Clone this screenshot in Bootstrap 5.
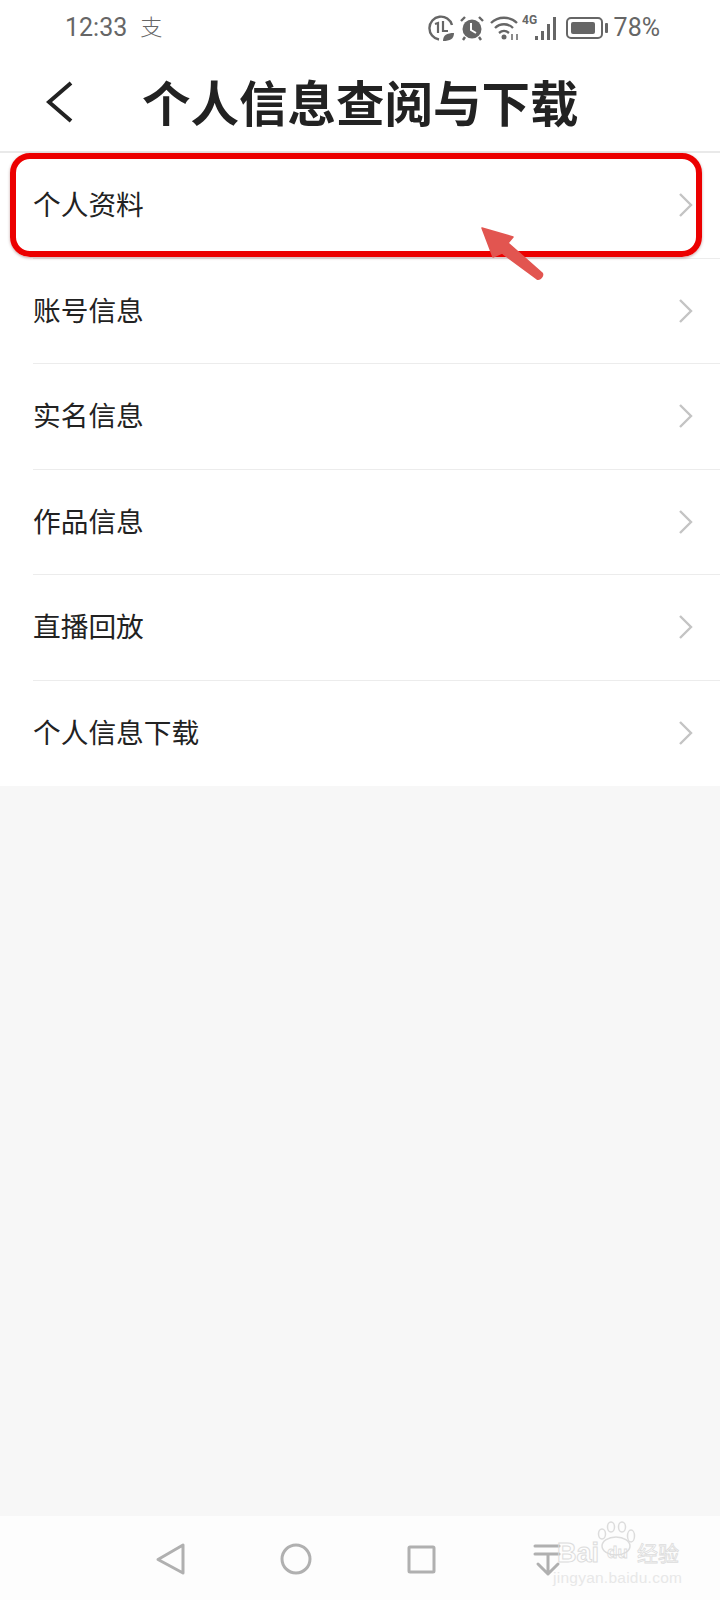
<!DOCTYPE html>
<html lang="zh-CN">
<head>
  <meta charset="UTF-8">
  <meta name="viewport" content="width=device-width, initial-scale=1.0">
  <title>个人信息查阅与下载</title>
  <link href="https://cdn.jsdelivr.net/npm/bootstrap@5.3.0/dist/css/bootstrap.min.css" rel="stylesheet">
  <style>
    body { background: #f7f7f7; font-family: "Noto Sans CJK SC", "Noto Sans", sans-serif; color: #222; }
    .phone { width: 720px; height: 1600px; }
    .status-bar { height: 56px; padding: 0 60px 0 65px; background: #fff; color: #666; font-family: Roboto, sans-serif; font-size: 25px; }
    .status-app { font-family: "Noto Sans CJK SC", sans-serif; font-size: 22px; font-weight: 300; margin-left: 13px; margin-bottom: 5px; }
    .status-icons { gap: 6px; }
    .sig-icon { margin-left: -5px; }
    .bat-icon { margin-left: 2px; }
    .title-bar { height: 97px; padding-left: 46px; background: #fff; border-bottom: 2px solid #e9e9e9; }
    .title-bar h1 { font-size: 48.5px; font-weight: 700; margin: 0 0 4px 68px; line-height: 1; color: #222; }
    .back-icon { margin-bottom: 4px; }
    .info-list { background: #fff; }
    .info-row { height: 105.5px; margin-left: 33px; padding-right: 26px; font-size: 27.7px; border-bottom: 1px solid #ececec; }
    .info-row:last-child { border-bottom: 0; }
    .info-row span { margin-bottom: 2px; }
    .mark-frame { left: 10px; top: 153px; width: 692px; height: 104px; border: 6px solid #ec0000; border-radius: 20px; box-shadow: 0 1px 3px rgba(90,0,0,.35); }
    .mark-arrow { left: 476px; top: 222px; }
    .nav-bar { height: 84px; background: #fdfdfd; margin-top: auto; }
    .nav-icon { left: 0; top: 1px; }
    .wm-box { left: 536px; top: 1520px; width: 180px; height: 72px; color: #dcdcdc; }
    .wm-bai { left: 21px; top: 20px; font-family: "Liberation Sans", sans-serif; font-size: 27px; line-height: 1; font-weight: 700; color: transparent; -webkit-text-stroke: 1px #dcdcdc; }
    .wm-du { left: 71px; top: 24px; font-family: "Liberation Sans", sans-serif; font-size: 17px; line-height: 1; font-weight: 700; color: transparent; -webkit-text-stroke: .8px #dcdcdc; }
    .wm-cn { left: 101px; top: 22px; font-size: 21px; line-height: 1; color: transparent; -webkit-text-stroke: .8px #dcdcdc; }
    .wm-url { left: 17px; top: 50px; font-family: "Liberation Sans", sans-serif; font-size: 15.5px; line-height: 1; letter-spacing: .25px; white-space: nowrap; color: #e8e8e8; }
  </style>
</head>
<body class="m-0">
<div class="phone d-flex flex-column position-relative overflow-hidden">

  <!-- status bar -->
  <div class="status-bar d-flex align-items-center justify-content-between">
    <div class="d-flex align-items-center">12:33<span class="status-app">支</span></div>
    <div class="d-flex align-items-center status-icons">
      <svg width="26" height="26" viewBox="0 0 26 26" fill="none" stroke="#666" stroke-width="2.4">
        <path d="M24 10A11.500 11.500 0 1 0 11 24.500"/>
        <path d="M7 9l3-1v10M15 6v10h5" stroke-width="2.2"/>
        <path d="M15 26c0-6 4-8 11-8 0 6-4 8-11 8z" fill="#666" stroke="none"/>
      </svg>
      <svg width="24" height="26" viewBox="0 0 24 26">
        <circle cx="12" cy="14" r="9.500" fill="#666"/>
        <path d="M11 8v7l5 3" fill="none" stroke="#fff" stroke-width="2"/>
        <path d="M1 6l4-4M23 6l-4-4M5 22l-2 3M19 22l2 3" stroke="#666" stroke-width="2.4"/>
      </svg>
      <svg width="31" height="26" viewBox="0 0 31 26" fill="none" stroke="#666" stroke-width="2.3">
        <path d="M1 8c7-7 19-7 26 0M5 13c5-5 13-5 18 0M9 18c3-2.500 7-2.500 10 0"/>
        <circle cx="14" cy="22" r="2.500" fill="#666" stroke="none"/>
        <path d="M22 19v6M27 19v6" stroke-width="1.500"/>
      </svg>
      <svg class="sig-icon" width="36" height="28" viewBox="0 0 36 28">
        <text x="0" y="10" font-family="Roboto, sans-serif" font-size="12" font-weight="700" fill="#666">4G</text>
        <rect x="13" y="22" width="3" height="4" fill="#666"/>
        <rect x="19" y="17" width="3" height="9" fill="#666"/>
        <rect x="25" y="10" width="3" height="16" fill="#666"/>
        <rect x="31" y="3" width="3" height="23" fill="#666"/>
      </svg>
      <svg class="bat-icon" width="42" height="24" viewBox="0 0 42 24">
        <rect x="1" y="2" width="35" height="20" rx="4" fill="none" stroke="#666" stroke-width="2"/>
        <rect x="5" y="6" width="24" height="12" rx="2" fill="#666"/>
        <rect x="39" y="7" width="3" height="10" rx="1" fill="#666"/>
      </svg>
      <span>78%</span>
    </div>
  </div>

  <!-- title -->
  <div class="title-bar d-flex align-items-center">
    <svg class="back-icon" width="28" height="44" viewBox="0 0 28 44" fill="none" stroke="#222" stroke-width="4">
      <path d="M25 3L3 22l22 19"/>
    </svg>
    <h1>个人信息查阅与下载</h1>
  </div>

  <!-- rows -->
  <div class="info-list">
    <div class="info-row d-flex align-items-center justify-content-between"><span>个人资料</span><svg width="16" height="26" viewBox="0 0 16 26" fill="none" stroke="#c4c4c4" stroke-width="2.400"><path d="M2 2l11 11L2 24"/></svg></div>
    <div class="info-row d-flex align-items-center justify-content-between"><span>账号信息</span><svg width="16" height="26" viewBox="0 0 16 26" fill="none" stroke="#c4c4c4" stroke-width="2.400"><path d="M2 2l11 11L2 24"/></svg></div>
    <div class="info-row d-flex align-items-center justify-content-between"><span>实名信息</span><svg width="16" height="26" viewBox="0 0 16 26" fill="none" stroke="#c4c4c4" stroke-width="2.400"><path d="M2 2l11 11L2 24"/></svg></div>
    <div class="info-row d-flex align-items-center justify-content-between"><span>作品信息</span><svg width="16" height="26" viewBox="0 0 16 26" fill="none" stroke="#c4c4c4" stroke-width="2.400"><path d="M2 2l11 11L2 24"/></svg></div>
    <div class="info-row d-flex align-items-center justify-content-between"><span>直播回放</span><svg width="16" height="26" viewBox="0 0 16 26" fill="none" stroke="#c4c4c4" stroke-width="2.400"><path d="M2 2l11 11L2 24"/></svg></div>
    <div class="info-row d-flex align-items-center justify-content-between"><span>个人信息下载</span><svg width="16" height="26" viewBox="0 0 16 26" fill="none" stroke="#c4c4c4" stroke-width="2.400"><path d="M2 2l11 11L2 24"/></svg></div>
  </div>

  <!-- bottom nav -->
  <div class="nav-bar position-relative">
    <svg class="nav-icon position-absolute" width="720" height="84" viewBox="0 0 720 84" fill="none" stroke="#b0b0b0" stroke-width="3" stroke-linejoin="round" stroke-linecap="round">
      <path d="M183 28v28l-25-13.500z"/>
      <circle cx="296" cy="42" r="14"/>
      <rect x="409" y="30" width="25" height="25" rx="1"/>
      <path d="M535 29h24M535 37h24M548 37v20M538 47l10 10 10-10"/>
    </svg>
  </div>

  <!-- annotation over the screenshot -->
  <div class="mark-frame position-absolute"></div>
  <svg class="mark-arrow position-absolute" width="70" height="62" viewBox="0 0 70 62">
    <path d="M6 6l31 9-5 6 34 30c2 3-2 7-5 6L26 31l-9 4z" fill="#e25550" stroke="#e25550" stroke-width="1.500" stroke-linejoin="round"/>
  </svg>

  <!-- watermark -->
  <div class="wm-box position-absolute">
    <svg class="position-absolute" style="left:60px;top:1px" width="42" height="36" viewBox="0 0 42 36" fill="none" stroke="#dcdcdc" stroke-width="1.500">
      <ellipse cx="6" cy="13" rx="3.500" ry="5"/>
      <ellipse cx="15" cy="6" rx="3.500" ry="5"/>
      <ellipse cx="26" cy="6" rx="3.500" ry="5"/>
      <ellipse cx="35" cy="15" rx="3.500" ry="6"/>
      <ellipse cx="20" cy="25" rx="14" ry="9"/>
    </svg>
    <span class="wm-bai position-absolute">Bai</span>
    <span class="wm-du position-absolute">du</span>
    <span class="wm-cn position-absolute">经验</span>
    <span class="wm-url position-absolute">jingyan.baidu.com</span>
  </div>
</div>
<script src="https://cdn.jsdelivr.net/npm/bootstrap@5.3.0/dist/js/bootstrap.bundle.min.js"></script>
</body>
</html>
